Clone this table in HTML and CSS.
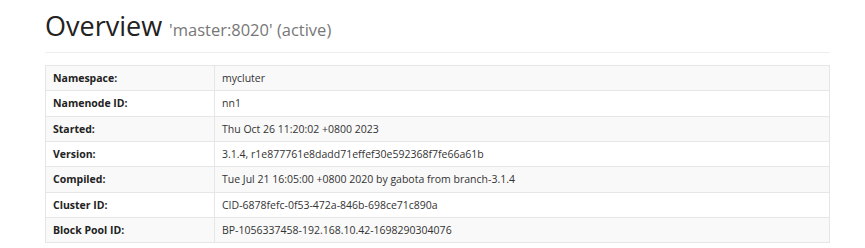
FILE: index.html
```html
<!DOCTYPE html>
<html>
<head>
<meta charset="utf-8">
<link rel="stylesheet" href="styles.css">
</head>
<body>
<div class="container">
  <div class="page-header">
    <h1>Overview <small>'master:8020' (active)</small></h1>
  </div>
  <table class="info">
    <tr><th>Namespace:</th><td>mycluter</td></tr>
    <tr><th>Namenode ID:</th><td>nn1</td></tr>
    <tr><th>Started:</th><td>Thu Oct 26 11:20:02 +0800 2023</td></tr>
    <tr><th>Version:</th><td>3.1.4, r1e877761e8dadd71effef30e592368f7fe66a61b</td></tr>
    <tr><th>Compiled:</th><td>Tue Jul 21 16:05:00 +0800 2020 by gabota from branch-3.1.4</td></tr>
    <tr><th>Cluster ID:</th><td>CID-6878fefc-0f53-472a-846b-698ce71c890a</td></tr>
    <tr><th>Block Pool ID:</th><td>BP-1056337458-192.168.10.42-1698290304076</td></tr>
  </table>
</div>
</body>
</html>
```
FILE: styles.css
```css
html, body {
  margin: 0;
  padding: 0;
  background: #fff;
}
body {
  font-family: "Open Sans", "Noto Sans", sans-serif;
  color: #333;
}
.container {
  margin-left: 45px;
  width: 785px;
}
.page-header {
  border-bottom: 1px solid #eee;
  padding-bottom: 4px;
  margin-bottom: 12px;
}
.page-header h1 {
  margin: 0;
  padding-top: 8px;
  font-size: 27px;
  font-weight: normal;
  line-height: 36px;
  color: #222;
}
.page-header small {
  font-size: 16.5px;
  color: #777;
}
.info {
  width: 100%;
  border-collapse: collapse;
  border: 1px solid #e6e6e6;
  font-size: 10.5px;
}
.info th, .info td {
  border-top: 1px solid #e6e6e6;
  padding: 5px 7px 5px 7px;
  line-height: 14.33px;
  text-align: left;
  vertical-align: top;
}
.info th {
  width: 154px;
  font-weight: bold;
  color: #222;
  border-right: 1px solid #e6e6e6;
}
.info td {
  color: #333;
}
.info tr:nth-child(odd) {
  background: #f9f9f9;
}
```
